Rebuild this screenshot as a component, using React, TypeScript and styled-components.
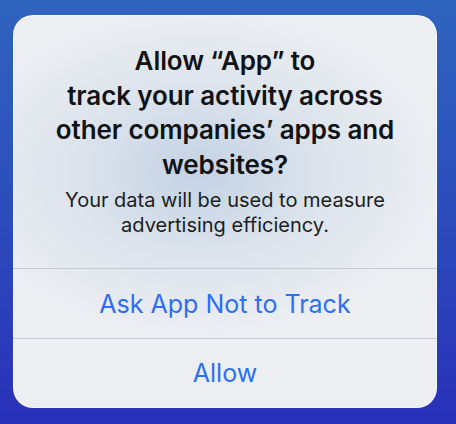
import React from "react";
import styled, { createGlobalStyle } from "styled-components";

const Global = createGlobalStyle`
  html, body { margin: 0; padding: 0; }
  body {
    width: 456px;
    height: 424px;
    overflow: hidden;
    font-family: Inter, "Noto Sans", "Liberation Sans", sans-serif;
    -webkit-font-smoothing: antialiased;
  }
`;

const Screen = styled.div`
  width: 456px;
  height: 424px;
  box-sizing: border-box;
  padding: 15px 19px 16px 13px;
  display: flex;
  background: linear-gradient(180deg, #2f64be 0%, #2c4fbc 45%, #2a30b9 100%);
`;

const Alert = styled.div`
  flex: 1;
  display: flex;
  flex-direction: column;
  border-radius: 20px;
  overflow: hidden;
  background:
    radial-gradient(ellipse 58% 42% at 44% 40%, rgba(192, 207, 226, 0.9) 0%, rgba(208, 219, 232, 0.5) 55%, rgba(236, 238, 242, 0) 100%),
    #eceef2;
  box-shadow: inset 0 0 0 1px rgba(255, 255, 255, 0.5);
`;

const Header = styled.div`
  display: flex;
  flex-direction: column;
  align-items: center;
  padding: 29px 16px 31px;
  text-align: center;
`;

const Title = styled.h1`
  margin: 0;
  font-size: 26px;
  line-height: 34.5px;
  font-weight: 600;
  color: #111214;
  letter-spacing: -0.1px;
`;

const Message = styled.p`
  margin: 6px 0 0;
  font-size: 20px;
  line-height: 24.5px;
  font-weight: 400;
  color: #1c1d20;
`;

const Action = styled.button<{ $last?: boolean }>`
  all: unset;
  box-sizing: border-box;
  height: ${(p) => (p.$last ? "69px" : "70px")};
  border-top: 1.5px solid #c6cbd3;
  display: flex;
  align-items: center;
  justify-content: center;
  font-family: Inter, "Noto Sans", "Liberation Sans", sans-serif;
  font-size: 25px;
  font-weight: 400;
  color: #2c6ff2;
  cursor: pointer;
`;

export default function App() {
  return (
    <>
      <Global />
      <Screen>
        <Alert>
          <Header>
            <Title>
              Allow “App” to
              <br />
              track your activity across
              <br />
              other companies’ apps and
              <br />
              websites?
            </Title>
            <Message>
              Your data will be used to measure
              <br />
              advertising efficiency.
            </Message>
          </Header>
          <Action>Ask App Not to Track</Action>
          <Action $last>Allow</Action>
        </Alert>
      </Screen>
    </>
  );
}
